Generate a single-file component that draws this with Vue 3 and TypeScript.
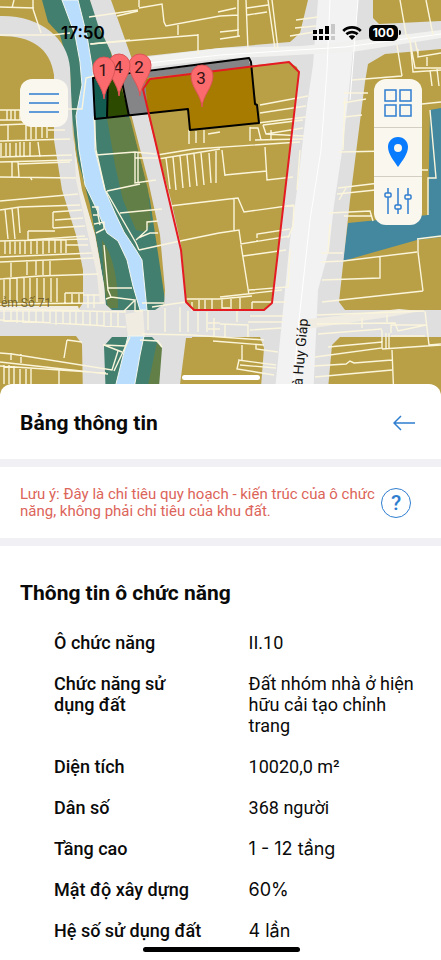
<script setup lang="ts">
interface Pin {
  label: string
  x: number
  y: number
}

interface InfoRow {
  label: string
  value: string
  plain?: boolean
}

const pins: Pin[] = [
  { label: '2', x: 140, y: 96 },
  { label: '4', x: 119, y: 96 },
  { label: '1', x: 104, y: 99 },
  { label: '3', x: 202, y: 107 },
]

const rows: InfoRow[] = [
  { label: 'Ô chức năng', value: 'II.10' },
  { label: 'Chức năng sử dụng đất', value: 'Đất nhóm nhà ở hiện hữu cải tạo chỉnh trang' },
  { label: 'Diện tích', value: '10020,0 m²' },
  { label: 'Dân số', value: '368 người' },
  { label: 'Tầng cao', value: '1 - 12 tầng', plain: true },
  { label: 'Mật độ xây dựng', value: '60%', plain: true },
  { label: 'Hệ số sử dụng đất', value: '4 lần', plain: true },
]
</script>

<template>
  <main class="screen">
    <section class="map">
      <svg class="map-canvas" viewBox="0 0 441 400" preserveAspectRatio="xMidYMin slice" aria-hidden="true">
        <rect width="441" height="400" fill="#b9a046" />

        <!-- green banks -->
        <path fill="#437f6e" d="M42 0H90L110 50L130 120L150 200L165 300L162 308L150 315H112L106 308L100 260L90 205L78 160L72 120L70 70L60 35L48 22Z" />
        <path fill="#437f6e" d="M103 342L112 336H152L163 345L158 400H104Z" />
        <path fill="#637f48" d="M106 112L130 118L148 190L151 222L146 232L136 230L123 200L115 165Z" />
        <path fill="#637f48" d="M102 240C112 254 118 276 118 308H108L104 285Z" />
        <path fill="#637f48" d="M157 342L163 345L158 400H145Z" />
        <path fill="#43889e" d="M430 110L441 108V237L417 240L343 261L348 223L428 215Z" />

        <!-- local streets -->
        <path fill="#dfdfdf" d="M0 16C40 15 68 38 70 68L73 135L81 190L95 235L104 285L106 308L112 318H83V270L76 235L62 190L54 140V75C50 48 32 36 0 36Z" />
        <path fill="#f0ece2" d="M72 110L75 150L82 190L95 235L104 285L106 310L100 305L97 275L86 225L76 180Z" />
        <path fill="#dfdfdf" d="M90 0H111L138 76L157 150L171 200L181 245L186 302L192 311V338H186L178 400H158L162 348L152 337V315L164 306L165 290L160 235L148 180L130 110L111 52L98 25Z" />
        <path fill="#dfdfdf" d="M0 310H78L83 303H104L112 310H155L164 304H186L194 311H264L272 302L299 75L297 67L288 62L136 76L128 58L220 48L290 42L300 33L308 0H373V18L379 24L441 21V49L385 54L368 64L365 82L350 200L339 302L345 310H441V337H340L332 345L327 400H260L264 348L260 337H112L104 346L106 400H83L82 344L76 336H0Z" />
        <path fill="#f2f2f2" d="M318 0H358L354 40L350 80L343 145L334 205L329 250L318 290L313 400H274L283 310L290 240L297 190L307 105L313 65Z" />
        <path fill="#f1f1ef" d="M130 59L220 48L302 46L360 40L441 30V38L352 52L220 59L134 69Z" />
        <path fill="#f0ece2" d="M0 306H78L80 312H0ZM125 314L143 311L145 337H128ZM300 320L399 309L420 311L395 316L300 330Z" />
        <path fill="none" stroke="#fff" d="M330 0L327 70L321 150L310 220L299 320L292 400M358 0L350 100M140 64L220 55L345 47L441 34" />

        <!-- river -->
        <path fill="#b9defd" stroke="#f4f7ee" d="M62 0H78L87 36L93 72L95 105L95 150L105 190L115 213L124 232L136 250L142 260L147 310H140L133 286L127 260L118 241L107 233L96 208L85 185L79 150L76 116L82 85L80 62L75 35Z" />
        <path fill="#b9defd" stroke="#f4f7ee" d="M128 336H144L140 355L132 400H112Z" />

        <!-- parcel boundaries, west -->
        <g class="parcels">
          <path d="M0 7L34 8M14 0L12 8M33 0V9M33 9L41 33M0 35H52L70 33M0 110H54M0 120H53M7 110V120M11 110V120M15 110V120M20 110V120M25 110V120M32 110V120M8 124V140M26 122V140M31 122V139M36 122V139M42 122V138M47 122V138M48 130H65M0 125L50 123M0 141L70 139M1 143V156M6 143V156M10 143V157M16 143V156M20 142V157M24 142V156M30 142V157M38 142L40 157M0 157L72 155M0 162L72 160M12 162V177M18 162L19 177M18 164L70 162M0 177L76 178M30 177L32 180M68 109H82L86 78L94 76" />
          <path d="M0 201L78 194M0 210L20 207L80 205M5 209L8 239M12 208L15 239M18 208L20 233M53 212L82 210M53 212V228M55 220L83 218M53 228L85 226M28 231H55M28 231V240L85 236M0 241L88 239M5 241V254M10 241V254M15 241V254M20 241V254M25 241V254M31 241V254M37 241V254M43 240V254M49 240V253M55 240V253M61 239V253M66 239V253M66 245H88M0 257L92 253M0 262L94 258M11 261V277M27 260V275M36 260V275M43 260V275M50 260V276M0 279L40 276L98 274M4 278V302M10 278V302M17 278V302M24 278V302M30 278V302M37 278V302M44 278V302M51 278V302M57 278V302M65 293H84M65 293V303M72 294V303M79 294V303M83 295H99M0 304L104 303M88 294V308M94 294V308" />
          <path d="M0 309L126 312M0 320L126 327M4 310V322M11 310V322M17 310V323M23 311V323M29 311V323M36 311V323M43 311V324M50 311V324M56 311V325M63 311V325M70 311V325M76 311V325M83 311V326M90 311V326M97 311V326M104 311V327M111 311V327M118 312V327M67 340L82 342M103 345L126 346M67 340L64 358M0 353L12 354L112 370L118 351M11 353V360M21 354V363M0 362L108 374M0 366L60 370L106 373M4 365V384M9 365V384M14 366V384M20 367V384M26 368V384M31 368V384M59 369V384" />
        </g>

        <!-- parcel boundaries, river banks -->
        <g class="parcels">
          <path d="M89 17L138 10M91 44L130 40M94 116L96 150L105 190M96 155L135 152L156 154M135 152V183L156 180M138 153V182M135 158H158M107 191L140 184M92 207H98V215H93M94 224L104 222V229L96 233M98 215L100 225M106 191L136 243L139 250M120 213L162 209M136 240L147 230V222L158 221M139 250L180 241M138 238L150 233H158M104 245L108 290L111 297M108 288H132M106 299L111 297L135 300L124 311M135 300V311H143M142 303H164M104 345L122 352M114 371L130 337M140 340L158 341L162 347" />
          <path d="M148 310V330M165 308V332M180 307V332M188 311V332M198 312V332M207 312V332M152 307L172 304L186 302M142 334L192 335L264 340" />
        </g>

        <!-- parcel boundaries, centre -->
        <g class="parcels">
          <path d="M117 16L138 11M139 0V7M139 8L162 4L164 22L166 26L220 16M178 25V35M90 44L198 35M198 34V54M238 0V36M246 0L248 50M218 12L236 8M220 16L238 15M220 39L240 36M220 32L239 30M247 8L268 5M247 15L267 12M268 0L275 49M272 0L278 49M296 20L318 17M295 28L316 26M290 36L314 32" />
          <path d="M189 130V144M196 131V143M204 130V143M208 134L220 132M157 155L194 149L300 142M158 159L220 149M166 158L170 189M173 157L176 190M180 156L183 188M187 155L190 187M194 154L197 186M201 153L204 185M209 153L211 183M216 151V183M222 150L225 176M225 175L267 171M265 147L267 180L293 177M170 206L229 199L238 198L244 212L294 205M234 199V230M180 241L219 233L239 230L241 244L290 236M257 238V234L290 229M257 240V242M241 245L249 295M243 256L286 250M220 297L282 290M249 290L287 287M186 299H219L252 296M192 302V311M199 300V311M205 300V311M212 299V311M222 299V308H230M231 298V309M240 297V309M252 302H286M252 309V302" />
          <path d="M260 105L308 96M260 113L306 106M258 123L306 117M263 125L303 120M250 127V141M250 128H258L261 140M263 125L266 134L303 128M271 130V139M266 134L304 136M255 140L303 139M300 150L297 190M287 206H294L293 226L288 238M290 250L288 288" />
          <path d="M220 324L248 325V337M225 324V337M214 318V336M237 309V322M208 323H220M208 329H220M250 316H284M248 322H283M250 330L281 328M213 341L264 345M242 345V360M256 344V349L278 352M238 360L276 365M239 360L237 369L274 375M240 365L276 368" />
        </g>

        <!-- parcel boundaries, east -->
        <g class="parcels">
          <path d="M400 0L406 34L410 40L413 72L441 70M426 0L433 35M397 45L402 76M352 80L402 76M410 41L415 68H441M415 41L418 54M418 49V57L441 53M427 57V66M430 70L432 86M437 69L439 86M344 93H368M343 103L366 99M344 117L362 115M345 98L343 150M339 152L388 151M338 188L388 182M337 194L385 189M339 200L346 188" />
          <path d="M404 80V130M374 170H428M422 104L441 102M430 110L436 178H428V215M329 213L370 211L373 221M344 216H371M321 253H343M321 262L343 261L417 252M380 257V278L322 280M418 239V252L423 291M322 302L423 291M417 239L441 236M330 224L328 252M317 315L424 311M317 324L395 323L398 331L426 325M362 318V328M387 315V322M391 333V325H427M382 330V348M389 333V349M425 311L429 345L441 344M318 334L382 329M391 336H425M328 347L382 342V348L315 357M314 366L346 364L350 361L354 363L392 360M315 377L392 370M392 350L394 400M382 349L441 345M386 333V348" />
        </g>

        <text class="street" transform="translate(308 319) rotate(-85)" text-anchor="end">Hà Huy Giáp</text>
        <text class="alley" x="1" y="307">ẻm Số 71</text>

        <!-- highlighted plots -->
        <path fill="#004f48" fill-opacity=".72" d="M93 78L108 76V117L95 119Z" />
        <path fill="#2d4b00" d="M108 77L120 82L129 115L107 117Z" />
        <path fill="#858588" d="M120 76L248 58L251 67L145 78L148 114L129 115Z" />
        <path fill="#a77b00" d="M145 79L251 67L259 123L190 130L188 109L148 113Z" />
        <path fill="none" stroke="#000" stroke-width="2" stroke-linejoin="round" d="M93 78L249 58L251 62L255 104L257 105L259 123L190 130L188 109L95 119ZM108 78L107 118M121 77L129 116" />
        <path fill="none" stroke="#e51b23" stroke-width="2" stroke-linejoin="round" d="M143 89L150 79L289 62L299 72L272 303L264 310H194L186 302L181 250Z" />

        <g v-for="pin in pins" :key="pin.label" :transform="`translate(${pin.x} ${pin.y})`">
          <path class="pin-shape" d="M0 0C-1 -12 -11 -20 -11 -31A11 11 0 0 1 11 -31C11 -20 1 -12 0 0Z" />
          <text class="pin-label" x="-1" y="-23" text-anchor="middle">{{ pin.label }}</text>
        </g>
      </svg>

      <header class="status">
        <span class="clock">17:50</span>
        <span class="indicators">
          <svg width="22" height="14" viewBox="0 0 22 14" aria-hidden="true">
            <path d="M0 4h4v4H0zM6 3h4v5H6zM12 0h4v8h-4zM0 10h4v4H0zM6 10h4v4H6zM12 10h4v4h-4z" />
            <path fill="#8a8a8a" fill-opacity=".4" d="M18 -2h4v10h-4zM18 10h4v4h-4z" />
          </svg>
          <svg width="20" height="14" viewBox="0 0 20 14" aria-hidden="true">
            <path d="M10 0C6 0 2.700 1.500 .3 4L2.200 6C4.200 4 7 2.800 10 2.800S15.800 4 17.800 6L19.700 4C17.300 1.500 14 0 10 0ZM10 4.700C7.400 4.700 5.200 5.700 3.500 7.300L5.400 9.200C6.600 8.100 8.200 7.400 10 7.400S13.400 8.100 14.600 9.200L16.500 7.300C14.800 5.700 12.600 4.700 10 4.700ZM10 9.300C8.700 9.300 7.600 9.800 6.700 10.600L10 14L13.300 10.600C12.400 9.800 11.300 9.300 10 9.300Z" />
          </svg>
          <span class="battery">100</span>
        </span>
      </header>

      <div class="controls">
        <button class="tile" type="button" aria-label="Menu">
          <svg width="30" height="20" viewBox="0 0 30 20" class="line-icon"><path d="M0 1H30M0 10H30M0 19H30" /></svg>
        </button>
        <div class="tools">
          <button type="button" aria-label="Lớp bản đồ">
            <svg width="28" height="28" viewBox="0 0 28 28" class="line-icon"><path d="M1 1H12V12H1ZM16 1H27V12H16ZM1 16H12V27H1ZM16 16H27V27H16Z" /></svg>
          </button>
          <button type="button" aria-label="Vị trí">
            <svg width="20" height="30" viewBox="0 0 20 30"><path fill="#087bff" fill-rule="evenodd" d="M10 0C4 0 0 4.500 0 10C0 17 6 24 10 30C14 24 20 17 20 10C20 4.500 16 0 10 0ZM10 7A4 4 0 1 1 10 15A4 4 0 1 1 10 7Z" /></svg>
          </button>
          <button type="button" aria-label="Bộ lọc">
            <svg width="28" height="28" viewBox="0 0 28 28" class="line-icon"><path d="M4 1V6M4 10V27M14 1V18M14 22V27M24 1V8M24 12V27" /><rect x="1" y="6" width="6" height="4" rx="1" /><rect x="11" y="18" width="6" height="4" rx="1" /><rect x="21" y="8" width="6" height="4" rx="1" /></svg>
          </button>
        </div>
      </div>
      <span class="grabber"></span>
    </section>

    <section class="sheet">
      <header class="sheet-head">
        <h1>Bảng thông tin</h1>
        <button type="button" aria-label="Quay lại">
          <svg width="22" height="16" viewBox="0 0 22 16" class="line-icon"><path d="M22 8H1M8 1L1 8L8 15" /></svg>
        </button>
      </header>
      <div class="note">
        <p>Lưu ý: Đây là chỉ tiêu quy hoạch - kiến trúc của ô chức năng, không phải chỉ tiêu của khu đất.</p>
        <button class="help" type="button" aria-label="Trợ giúp">?</button>
      </div>
      <div class="details">
        <h2>Thông tin ô chức năng</h2>
        <table>
          <tbody>
            <tr v-for="row in rows" :key="row.label">
              <th scope="row">{{ row.label }}</th>
              <td :class="{ plain: row.plain }">{{ row.value }}</td>
            </tr>
          </tbody>
        </table>
      </div>
    </section>
    <span class="home-bar"></span>
  </main>
</template>

<style>
body {
  background: #fff;
}
</style>

<style scoped>
.screen {
  position: relative;
  display: flex;
  flex-direction: column;
  min-height: 100vh;
  font-family: Roboto, "Liberation Sans", sans-serif;
  color: #0a0a0a;
}

button {
  display: flex;
  align-items: center;
  justify-content: center;
  margin: 0;
  padding: 0;
  border: 0;
  background: none;
  color: #2f7ed0;
  cursor: pointer;
}

.line-icon {
  fill: none;
  stroke: #2f7ed0;
  stroke-width: 1.500;
}

.map {
  position: relative;
  height: 384px;
}

.map-canvas {
  position: absolute;
  inset: 0;
  width: 100%;
  height: 400px;
}

.parcels {
  fill: none;
  stroke: #fbf5dc;
  stroke-width: 1.400;
}

.street {
  font: 14px Roboto, sans-serif;
  fill: #111;
}

.alley {
  font: 12px Roboto, sans-serif;
  fill: #5f5021;
  fill-opacity: .8;
}

.pin-shape {
  fill: #fb6a6c;
  stroke: #dc5557;
  stroke-width: 1;
}

.pin-label {
  font: 400 17px Roboto, sans-serif;
  fill: #351214;
}

.status {
  position: relative;
  display: flex;
  align-items: center;
  justify-content: space-between;
  padding: 22px 43px 0 61px;
  height: 22px;
  color: #000;
}

.clock {
  font: 600 17px/22px Inter, sans-serif;
}

.indicators {
  display: flex;
  align-items: center;
  gap: 7px;
}

.indicators svg {
  overflow: visible;
}

.battery {
  position: relative;
  padding: 0 4px;
  border-radius: 5px;
  background: #000;
  color: #fff;
  font: 700 12px/16px Inter, sans-serif;
}

.battery::after {
  content: "";
  position: absolute;
  top: 5px;
  right: -3px;
  width: 2px;
  height: 5px;
  border-radius: 0 2px 2px 0;
  background: #000;
}

.controls {
  position: relative;
  display: flex;
  align-items: flex-start;
  justify-content: space-between;
  padding: 35px 19px 0 20px;
}

.tile,
.tools {
  width: 48px;
  border-radius: 12px;
  background: #faf7ef;
}

.tile {
  height: 48px;
}

.tools {
  overflow: hidden;
}

.tools button {
  box-sizing: content-box;
  width: 100%;
  height: 48px;
}

.tools button + button {
  border-top: 1px solid #d3cec2;
}

.grabber {
  position: absolute;
  left: 50%;
  bottom: 4px;
  width: 78px;
  height: 5px;
  margin-left: -39px;
  border-radius: 3px;
  background: #fff;
}

.sheet {
  position: relative;
  flex: 1;
  border-radius: 12px 12px 0 0;
  background: #fff;
}

.sheet-head,
.note {
  display: flex;
  align-items: center;
  justify-content: space-between;
  border-bottom: 8px solid #f0f0f5;
}

.sheet-head {
  padding: 25px 26px 22px 20px;
}

h1,
h2 {
  margin: 0;
  font-size: 21px;
  line-height: 28px;
  font-weight: 700;
}

.note {
  gap: 4px;
  padding: 19px 30px 18px 20px;
}

.note p {
  flex: 1;
  margin: 0;
  color: #dc6459;
  font-size: 15px;
  line-height: 17px;
}

.help {
  flex: none;
  width: 30px;
  height: 30px;
  border: 1px solid #2f7ed0;
  border-radius: 50%;
  font: 500 21px/28px Roboto, sans-serif;
}

.details {
  padding: 33px 20px 8px;
}

table {
  width: 100%;
  margin-top: 15px;
  border-collapse: collapse;
  table-layout: fixed;
}

th,
td {
  box-sizing: border-box;
  padding: 10px 0;
  font-size: 18px;
  line-height: 21px;
  text-align: left;
  vertical-align: top;
}

th {
  width: 57%;
  padding-left: 34px;
  padding-right: 44px;
  font-weight: 500;
}

td {
  font-weight: 400;
}

.plain {
  font-family: Inter, sans-serif;
}

.home-bar {
  position: absolute;
  left: 50%;
  bottom: 8px;
  width: 157px;
  height: 5px;
  margin-left: -78px;
  border-radius: 3px;
  background: #000;
}
</style>
